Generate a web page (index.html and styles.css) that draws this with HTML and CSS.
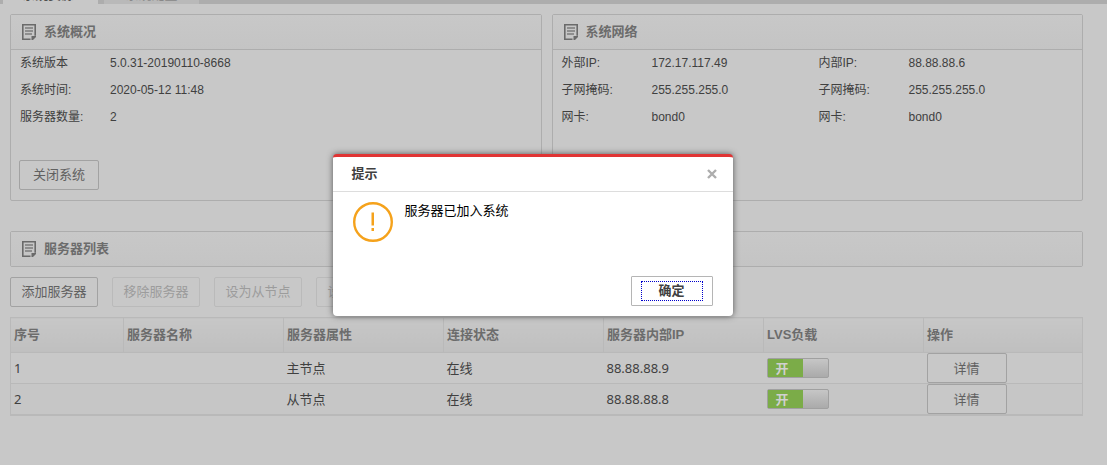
FILE: index.html
```html
<!DOCTYPE html>
<html lang="zh-CN">
<head>
<meta charset="utf-8">
<title>系统管理</title>
<link rel="stylesheet" href="styles.css">
</head>
<body>
<svg class="defs" width="0" height="0" aria-hidden="true">
  <symbol id="note" viewBox="0 0 14 16">
    <path d="M8.500 15.300H.800V.800h12.400v11" fill="none" stroke="#6a6a6a" stroke-width="1.600"/>
    <path d="M3 4h8M3 7h8M3 10h7" fill="none" stroke="#7c7c7c" stroke-width="1.400"/>
    <path d="M9.500 12h4.500v1L11 16H9.500z" fill="#6a6a6a"/>
  </symbol>
</svg>
<nav class="tabs">
  <a class="tab active" href="#resource">系统资源:</a>
  <a class="tab" href="#config">系统配置</a>
</nav>
<main class="page">
  <div class="overview">
    <section class="panel">
      <h2 class="panel-head"><svg class="note"><use href="#note"/></svg>系统概况</h2>
      <dl class="info">
        <dt>系统版本</dt><dd>5.0.31-20190110-8668</dd>
        <dt>系统时间:</dt><dd>2020-05-12 11:48</dd>
        <dt>服务器数量:</dt><dd>2</dd>
      </dl>
      <button class="btn shutdown" type="button">关闭系统</button>
    </section>
    <section class="panel">
      <h2 class="panel-head"><svg class="note"><use href="#note"/></svg>系统网络</h2>
      <div class="networks">
        <dl class="info">
          <dt>外部IP:</dt><dd>172.17.117.49</dd>
          <dt>子网掩码:</dt><dd>255.255.255.0</dd>
          <dt>网卡:</dt><dd>bond0</dd>
        </dl>
        <dl class="info">
          <dt>内部IP:</dt><dd>88.88.88.6</dd>
          <dt>子网掩码:</dt><dd>255.255.255.0</dd>
          <dt>网卡:</dt><dd>bond0</dd>
        </dl>
      </div>
    </section>
  </div>
  <section class="servers">
    <div class="panel">
      <h2 class="panel-head"><svg class="note"><use href="#note"/></svg>服务器列表</h2>
    </div>
    <div class="toolbar">
      <button class="btn" type="button">添加服务器</button>
      <button class="btn" type="button" disabled>移除服务器</button>
      <button class="btn" type="button" disabled>设为从节点</button>
      <button class="btn" type="button" disabled>设为主节点</button>
    </div>
    <table class="grid">
      <colgroup><col class="col-index"><col class="col"><col class="col"><col class="col"><col class="col"><col class="col"><col class="col-last"></colgroup>
      <thead>
        <tr><th>序号</th><th>服务器名称</th><th>服务器属性</th><th>连接状态</th><th>服务器内部IP</th><th>LVS负载</th><th>操作</th></tr>
      </thead>
      <tbody>
        <tr><td>1</td><td></td><td>主节点</td><td>在线</td><td>88.88.88.9</td>
          <td><button class="switch" type="button" role="switch" aria-checked="true" aria-label="LVS负载 1"><span class="on">开</span></button></td>
          <td><button class="btn detail" type="button">详情</button></td></tr>
        <tr><td>2</td><td></td><td>从节点</td><td>在线</td><td>88.88.88.8</td>
          <td><button class="switch" type="button" role="switch" aria-checked="true" aria-label="LVS负载 2"><span class="on">开</span></button></td>
          <td><button class="btn detail" type="button">详情</button></td></tr>
      </tbody>
    </table>
  </section>
</main>
<div class="dialog" role="dialog" aria-modal="true" aria-labelledby="dialog-title">
  <header class="dialog-head">
    <h2 class="dialog-title" id="dialog-title">提示</h2>
    <button class="close" type="button" aria-label="关闭">
      <svg width="10" height="10" viewBox="0 0 10 10"><path d="M1 1l8 8M9 1L1 9" stroke="#adadad" stroke-width="2.400"/></svg>
    </button>
  </header>
  <div class="dialog-body">
    <svg width="40" height="40" viewBox="0 0 40 40">
      <circle cx="20" cy="20" r="18.800" fill="none" stroke="#f5a21b" stroke-width="2.400"/>
      <path d="M18.500 10.500h2.500v13h-2.500zM18.500 26h2.500v3h-2.500z" fill="#f5a21b"/>
    </svg>
    <p class="message">服务器已加入系统</p>
  </div>
  <footer class="dialog-foot">
    <button class="confirm" type="button"><span class="focus">确定</span></button>
  </footer>
</div>
</body>
</html>
```
FILE: styles.css
```css
* { box-sizing: border-box; }
body {
  margin: 0;
  min-height: 100vh;
  background: #c8c8c8;
  color: #404040;
  font: 13px/20px "Liberation Sans", "Noto Sans CJK SC", sans-serif;
}
h2, dl, dd, p { margin: 0; }
button { font: inherit; color: inherit; padding: 0; }
.defs { position: absolute; }

.tabs {
  display: flex;
  align-items: flex-end;
  gap: 6px;
  height: 4px;
  padding-left: 3px;
  overflow: hidden;
  background: #adadad;
}
.tab {
  width: 95px;
  height: 24px;
  flex: none;
  background: #b9b9b9;
  color: #888;
  line-height: 30px;
  text-align: center;
  text-decoration: none;
}
.tab.active { background: #c8c8c8; color: #505050; font-weight: bold; }

.page { padding: 10px 24px 0 10px; }
.overview { display: grid; grid-template-columns: 1fr 1fr; gap: 10px; }
.panel { border: 1px solid #adadad; border-radius: 2px; }
.overview .panel { min-height: 187px; padding-bottom: 10px; }
.panel-head {
  display: flex;
  align-items: center;
  gap: 8px;
  height: 34px;
  padding-left: 11px;
  background: linear-gradient(#c8c8c8, #c4c4c4);
  color: #6c6c6c;
  font-size: 13px;
  font-weight: bold;
}
.overview .panel-head { height: 35px; border-bottom: 1px solid #adadad; }
.note { width: 14px; height: 16px; }
.info {
  display: grid;
  grid-template-columns: 90px 1fr;
  grid-auto-rows: 27px;
  padding-left: 9px;
  font-size: 12px;
  line-height: 27px;
}
.networks { display: grid; grid-template-columns: 257px 1fr; }

.btn {
  height: 30px;
  padding: 0 9px;
  border: 1px solid #a2a2a2;
  border-radius: 2px;
  background: #c8c8c8;
  color: #606060;
  line-height: 28px;
}
.btn:disabled { border-color: #bababa; color: #9c9c9c; }
.shutdown { width: 80px; margin: 29px 0 0 8px; }

.servers { margin-top: 30px; }
.toolbar { display: flex; gap: 14px; margin: 10px 0; }
.toolbar .btn { width: 88px; }

.grid {
  width: 100%;
  table-layout: fixed;
  border-collapse: collapse;
  border: 1px solid #b9b9b9;
  border-bottom-width: 2px;
}
.col-index { width: 113px; }
.col { width: 160px; }
.grid th, .grid td { padding: 0 3px; text-align: left; }
.grid th {
  height: 35px;
  border: 1px solid #b9b9b9;
  background: linear-gradient(#c7c7c7, #bfbfbf);
  color: #6c6c6c;
}
.grid td {
  height: 31px;
  border-bottom: 1px solid #b9b9b9;
  font-family: "Noto Sans", "Noto Sans CJK SC", sans-serif;
  line-height: 28px;
}
.grid tbody tr:nth-child(2) { background: #c6c6c6; }
.grid button { display: block; }
.detail { width: 80px; }
.switch {
  width: 62px;
  height: 20px;
  border: 1px solid #a0a0a0;
  border-radius: 2px;
  background: linear-gradient(#c6c6c6, #aaa);
  text-align: left;
}
.on {
  display: block;
  width: 35px;
  height: 18px;
  padding-left: 8px;
  background: #7bac48;
  color: #d0d0d0;
  font-weight: bold;
  line-height: 18px;
}

.dialog {
  position: absolute;
  top: 154px;
  left: calc(50% - 221px);
  width: 400px;
  border-top: 3px solid #e03434;
  border-radius: 4px;
  background: #fff;
  box-shadow: 0 0 6px #555;
}
.dialog-head {
  display: flex;
  align-items: center;
  justify-content: space-between;
  height: 35px;
  padding: 0 16px 0 19px;
  border-bottom: 1px solid #ddd;
}
.dialog-title { font-size: 13px; color: #404040; }
.close { display: flex; border: 0; background: none; }
.dialog-body { display: flex; gap: 12px; height: 74px; padding: 10px 20px 0; }
.message { color: #000; line-height: 18px; }
.dialog-foot { display: flex; justify-content: flex-end; padding: 10px 20px; }
.confirm {
  display: flex;
  width: 82px;
  height: 30px;
  padding: 4px 9px;
  border: 1px solid #b5b5b5;
  border-radius: 1px;
  background: #fff;
  color: #404040;
  font-weight: bold;
}
.focus { flex: 1; height: 20px; border: 1px dotted #00c; line-height: 18px; }
```
